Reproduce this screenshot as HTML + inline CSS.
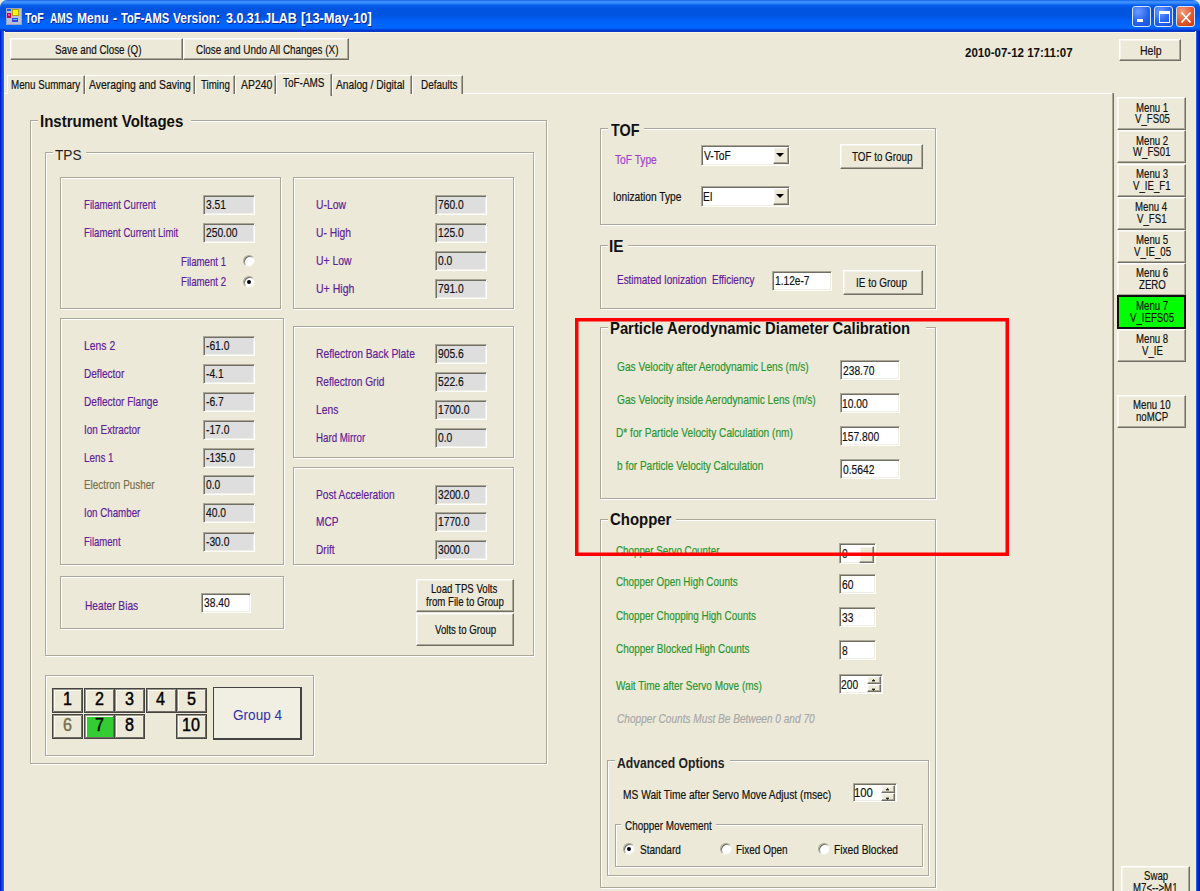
<!DOCTYPE html>
<html><head><meta charset="utf-8"><style>
*{margin:0;padding:0}
html,body{width:1200px;height:891px;overflow:hidden;background:#ECE9D8;position:relative}
body>div,body>svg{position:absolute}
div{position:absolute;box-sizing:content-box}
.t{white-space:pre;font-family:"Liberation Sans",sans-serif;transform-origin:0 0}
.gb{border:1px solid #ACA899;box-shadow:inset 1px 1px 0 #fff,1px 1px 0 #fff}
.btn{background:#ECE9D8;border:1px solid;border-color:#fff #716F64 #716F64 #fff;box-shadow:inset -1px -1px 0 #ACA899,inset 1px 1px 0 #F5F3EA}
.tb{border:1px solid;border-color:#ACA899 #fff #fff #ACA899;box-shadow:inset 1px 1px 0 #716F64,inset -1px -1px 0 #F1EFE2}
.tab{background:#ECE9D8;border:1px solid;border-bottom:none;border-color:#fff #716F64 #716F64 #fff;box-shadow:inset -1px 0 0 #ACA899}
.tab.sel{border-radius:2px 2px 0 0}
.nb{border:1px solid #45443F;box-shadow:inset 1px 1px 0 #9A978C,inset -1px -1px 0 #6E6C64,inset 2px 2px 0 #FFFDF2}
.radio{width:10px;height:10px;border-radius:50%;background:#fff;border:1px solid;border-color:#ACA899 #F1EFE2 #F1EFE2 #ACA899;box-shadow:inset 1px 1px 0 #716F64}
.radio.on::after{content:"";position:absolute;left:3px;top:3px;width:4px;height:4px;border-radius:50%;background:#000}
.title{left:0;top:0;width:1200px;height:31px;border-radius:7px 7px 0 0;background:linear-gradient(#0550E0 0px,#3A8EFF 1px,#3A8EFF 3px,#0A60F0 5px,#0054E0 8px,#0054E0 16px,#0060F4 20px,#0066FF 25px,#0066FF 28px,#0040D8 30px,#0030C0 31px)}
.lb{left:0;top:31px;width:4px;height:860px;background:linear-gradient(90deg,#0010C8,#0840E0 40%,#2A70F4)}
.rb{left:1196px;top:31px;width:4px;height:860px;background:linear-gradient(90deg,#3070F0,#0030E0 35%,#001090)}
.cb{top:6px;width:19px;height:21px;border:1px solid #D8E4FF;border-radius:3px;box-sizing:border-box;background:radial-gradient(circle at 30% 25%,#6A9CFF,#2663F0 55%,#1A50D8)}
.cb div{position:absolute}
.cb.close{background:radial-gradient(circle at 30% 25%,#F4A080,#E05A30 55%,#C83810)}
</style></head><body>
<div class="title"></div>
<div class="lb"></div><div class="rb"></div>
<div style="left:4px;top:31px;width:1192px;height:860px;background:#ECE9D8"></div>
<div style="left:4px;top:31px;width:1192px;height:1px;background:#0A3AC8"></div>
<div style="left:4px;top:32px;width:1192px;height:1px;background:#FBF6E4"></div>
<div style="left:4px;top:31px;width:1px;height:860px;background:#F8F0D8"></div>
<div style="left:1195px;top:31px;width:1px;height:860px;background:#F8F0D8"></div>
<div style="left:6px;top:8px;width:14px;height:15px;background:#B8C0D8;border:1px solid #9AA4C0"></div>
<div style="left:7px;top:9px;width:4px;height:2px;background:#1060F0"></div>
<div style="left:7px;top:13px;width:4px;height:5px;background:#D00040"></div>
<div style="left:8px;top:14px;width:2px;height:2px;background:#FF40C0"></div>
<div style="left:12px;top:9px;width:7px;height:7px;background:#FFFF00;border:1px solid #B0A000;box-sizing:border-box"></div>
<div style="left:12px;top:18px;width:6px;height:4px;background:#4040F0"></div>
<div style="left:13px;top:19px;width:4px;height:1px;background:#20E0E0"></div>
<div class="cb" style="left:1132px"><div style="left:4px;top:12px;width:6px;height:3px;background:#fff"></div></div>
<div class="cb" style="left:1154px"><div style="left:4px;top:4px;width:9px;height:10px;border:1px solid #fff;border-top-width:3px;box-sizing:border-box;width:11px;height:12px"></div></div>
<div class="cb close" style="left:1176px"><svg width="18" height="21" style="position:absolute;left:0;top:0"><path d="M4.5 5.5 L13.5 15.5 M13.5 5.5 L4.5 15.5" stroke="#fff" stroke-width="1.8"/></svg></div>
<div class="btn" style="left:10px;top:38px;width:171px;height:20px;"></div>
<div class="btn" style="left:183px;top:38px;width:164px;height:20px;"></div>
<div class="btn" style="left:1119px;top:39px;width:60px;height:20px;"></div>
<div style="left:4px;top:93px;width:1109px;height:1px;background:#fff"></div>
<div class="tab" style="left:7px;top:75px;width:76px;height:18px"></div>
<div class="tab" style="left:85px;top:75px;width:108px;height:18px"></div>
<div class="tab" style="left:195px;top:75px;width:38px;height:18px"></div>
<div class="tab" style="left:235px;top:75px;width:39px;height:18px"></div>
<div class="tab" style="left:332px;top:75px;width:78px;height:18px"></div>
<div class="tab" style="left:412px;top:75px;width:49px;height:18px"></div>
<div class="tab sel" style="left:276px;top:73px;width:54px;height:22px"></div>
<div style="left:1112px;top:93px;width:1px;height:798px;background:#ACA899"></div>
<div style="left:1113px;top:93px;width:1px;height:798px;background:#716F64"></div>
<div class="btn" style="left:1117px;top:97px;width:67px;height:31px;"></div>
<div class="btn" style="left:1117px;top:130px;width:67px;height:31px;"></div>
<div class="btn" style="left:1117px;top:164px;width:67px;height:31px;"></div>
<div class="btn" style="left:1117px;top:197px;width:67px;height:31px;"></div>
<div class="btn" style="left:1117px;top:230px;width:67px;height:31px;"></div>
<div class="btn" style="left:1117px;top:263px;width:67px;height:31px;"></div>
<div style="left:1117px;top:295px;width:65px;height:30px;background:#00FF00;border:2px solid #111"></div>
<div class="btn" style="left:1117px;top:329px;width:67px;height:31px;"></div>
<div class="btn" style="left:1117px;top:395px;width:67px;height:31px;"></div>
<div class="btn" style="left:1121px;top:866px;width:67px;height:31px;"></div>
<div class="gb" style="left:30px;top:120px;width:515px;height:642px"></div>
<div style="left:38px;top:119px;width:153px;height:4px;background:#ECE9D8"></div>
<div class="gb" style="left:45px;top:152px;width:487px;height:502px"></div>
<div style="left:53px;top:151px;width:33px;height:4px;background:#ECE9D8"></div>
<div class="gb" style="left:60px;top:177px;width:219px;height:130px"></div>
<div class="tb" style="left:203px;top:195px;width:50px;height:18px;background:#DEDEDE"></div>
<div class="tb" style="left:203px;top:223px;width:50px;height:18px;background:#DEDEDE"></div>
<div class="radio" style="left:243px;top:255px"></div>
<div class="radio on" style="left:243px;top:276px"></div>
<div class="gb" style="left:293px;top:177px;width:219px;height:130px"></div>
<div class="tb" style="left:435px;top:195px;width:50px;height:18px;background:#DEDEDE"></div>
<div class="tb" style="left:435px;top:223px;width:50px;height:18px;background:#DEDEDE"></div>
<div class="tb" style="left:435px;top:251px;width:50px;height:18px;background:#DEDEDE"></div>
<div class="tb" style="left:435px;top:279px;width:50px;height:18px;background:#DEDEDE"></div>
<div class="gb" style="left:60px;top:318px;width:222px;height:245px"></div>
<div class="tb" style="left:203px;top:336px;width:50px;height:18px;background:#DEDEDE"></div>
<div class="tb" style="left:203px;top:364px;width:50px;height:18px;background:#DEDEDE"></div>
<div class="tb" style="left:203px;top:392px;width:50px;height:18px;background:#DEDEDE"></div>
<div class="tb" style="left:203px;top:420px;width:50px;height:18px;background:#DEDEDE"></div>
<div class="tb" style="left:203px;top:448px;width:50px;height:18px;background:#DEDEDE"></div>
<div class="tb" style="left:203px;top:475px;width:50px;height:18px;background:#DEDEDE"></div>
<div class="tb" style="left:203px;top:503px;width:50px;height:18px;background:#DEDEDE"></div>
<div class="tb" style="left:203px;top:532px;width:50px;height:18px;background:#DEDEDE"></div>
<div class="gb" style="left:293px;top:326px;width:219px;height:130px"></div>
<div class="tb" style="left:435px;top:344px;width:50px;height:18px;background:#DEDEDE"></div>
<div class="tb" style="left:435px;top:372px;width:50px;height:18px;background:#DEDEDE"></div>
<div class="tb" style="left:435px;top:400px;width:50px;height:18px;background:#DEDEDE"></div>
<div class="tb" style="left:435px;top:428px;width:50px;height:18px;background:#DEDEDE"></div>
<div class="gb" style="left:293px;top:467px;width:219px;height:96px"></div>
<div class="tb" style="left:435px;top:485px;width:50px;height:18px;background:#DEDEDE"></div>
<div class="tb" style="left:435px;top:512px;width:50px;height:18px;background:#DEDEDE"></div>
<div class="tb" style="left:435px;top:540px;width:50px;height:18px;background:#DEDEDE"></div>
<div class="gb" style="left:60px;top:576px;width:222px;height:51px"></div>
<div class="tb" style="left:201px;top:593px;width:48px;height:18px;background:#fff"></div>
<div class="btn" style="left:416px;top:579px;width:96px;height:31px;"></div>
<div class="btn" style="left:416px;top:613px;width:96px;height:31px;"></div>
<div class="gb" style="left:45px;top:675px;width:267px;height:79px"></div>
<div class="nb" style="left:52px;top:688px;width:29px;height:23px;background:#ECE9D8"></div>
<div class="nb" style="left:84px;top:688px;width:29px;height:23px;background:#ECE9D8"></div>
<div class="nb" style="left:114px;top:688px;width:29px;height:23px;background:#ECE9D8"></div>
<div class="nb" style="left:146px;top:688px;width:29px;height:23px;background:#ECE9D8"></div>
<div class="nb" style="left:176px;top:688px;width:29px;height:23px;background:#ECE9D8"></div>
<div class="nb" style="left:52px;top:714px;width:29px;height:23px;background:#ECE9D8"></div>
<div class="nb" style="left:84px;top:714px;width:29px;height:23px;background:#33CC33"></div>
<div class="nb" style="left:114px;top:714px;width:29px;height:23px;background:#ECE9D8"></div>
<div class="nb" style="left:176px;top:714px;width:29px;height:23px;background:#ECE9D8"></div>
<div style="left:213px;top:687px;width:86px;height:50px;background:#F1EFE3;border:2px solid #444;border-width:1.5px 2px 2px 1.5px"></div>
<div class="gb" style="left:600px;top:128px;width:334px;height:95px"></div>
<div style="left:608px;top:127px;width:36px;height:4px;background:#ECE9D8"></div>
<div class="tb" style="left:701px;top:145px;width:87px;height:19px;background:#fff"></div>
<div class="btn" style="left:773px;top:147px;width:14px;height:15px"></div>
<svg style="position:absolute;left:776px;top:153px" width="9" height="5"><path d="M0 0H8L4 4Z" fill="#000"/></svg>
<div class="tb" style="left:701px;top:186px;width:87px;height:19px;background:#fff"></div>
<div class="btn" style="left:773px;top:188px;width:14px;height:15px"></div>
<svg style="position:absolute;left:776px;top:194px" width="9" height="5"><path d="M0 0H8L4 4Z" fill="#000"/></svg>
<div class="btn" style="left:840px;top:144px;width:81px;height:23px;"></div>
<div class="gb" style="left:600px;top:245px;width:334px;height:62px"></div>
<div style="left:608px;top:244px;width:19.600000000000023px;height:4px;background:#ECE9D8"></div>
<div class="tb" style="left:772px;top:271px;width:58px;height:18px;background:#fff"></div>
<div class="btn" style="left:843px;top:270px;width:78px;height:23px;"></div>
<div class="gb" style="left:600px;top:327px;width:334px;height:170px"></div>
<div style="left:608px;top:326px;width:318px;height:4px;background:#ECE9D8"></div>
<div class="tb" style="left:840px;top:360px;width:58px;height:18px;background:#fff"></div>
<div class="tb" style="left:840px;top:393px;width:58px;height:18px;background:#fff"></div>
<div class="tb" style="left:840px;top:426px;width:58px;height:18px;background:#fff"></div>
<div class="tb" style="left:840px;top:459px;width:58px;height:18px;background:#fff"></div>
<div class="gb" style="left:600px;top:519px;width:334px;height:367px"></div>
<div style="left:608px;top:518px;width:68px;height:4px;background:#ECE9D8"></div>
<div class="tb" style="left:839px;top:543px;width:35px;height:19px;background:#fff"></div>
<div class="btn" style="left:859px;top:546px;width:13px;height:15px"></div><div style="left:862px;top:553px;width:7px;height:1px;background:#333"></div>
<div class="tb" style="left:839px;top:574px;width:35px;height:18px;background:#fff"></div>
<div class="tb" style="left:839px;top:607px;width:35px;height:18px;background:#fff"></div>
<div class="tb" style="left:839px;top:640px;width:35px;height:18px;background:#fff"></div>
<div class="tb" style="left:839px;top:674px;width:42px;height:18px;background:#fff"></div>
<div class="btn" style="left:867px;top:676px;width:12px;height:6px"></div><div class="btn" style="left:867px;top:684px;width:12px;height:6px"></div>
<svg style="position:absolute;left:871px;top:678px" width="6" height="14"><path d="M1 3H4L2.5 1.5Z M1 11H4L2.5 12.5Z" fill="#222" stroke="#222" stroke-width="0.8"/></svg>
<div class="gb" style="left:607px;top:760px;width:320px;height:114px"></div>
<div style="left:615px;top:759px;width:115px;height:4px;background:#ECE9D8"></div>
<div class="tb" style="left:853px;top:783px;width:42px;height:17px;background:#fff"></div>
<div class="btn" style="left:881px;top:785px;width:12px;height:6px"></div><div class="btn" style="left:881px;top:793px;width:12px;height:6px"></div>
<svg style="position:absolute;left:885px;top:787px" width="6" height="14"><path d="M1 3H4L2.5 1.5Z M1 11H4L2.5 12.5Z" fill="#222" stroke="#222" stroke-width="0.8"/></svg>
<div class="gb" style="left:615px;top:824px;width:306px;height:41px"></div>
<div style="left:621px;top:823px;width:95px;height:4px;background:#ECE9D8"></div>
<div class="radio on" style="left:623px;top:843px"></div>
<div class="radio" style="left:720px;top:843px"></div>
<div class="radio" style="left:818px;top:843px"></div>
<div class="t" style="left:25.30px;top:10.68px;font-size:14.5px;line-height:14.5px;color:#fff;transform:scaleX(0.7372);font-weight:bold;text-shadow:1px 1px 0 #0A1E8C;">ToF</div>
<div class="t" style="left:49.70px;top:10.68px;font-size:14.5px;line-height:14.5px;color:#fff;transform:scaleX(0.7005);font-weight:bold;text-shadow:1px 1px 0 #0A1E8C;">AMS</div>
<div class="t" style="left:76.70px;top:10.68px;font-size:14.5px;line-height:14.5px;color:#fff;transform:scaleX(0.8324);font-weight:bold;text-shadow:1px 1px 0 #0A1E8C;">Menu</div>
<div class="t" style="left:112.50px;top:10.68px;font-size:14.5px;line-height:14.5px;color:#fff;transform:scaleX(0.8400);font-weight:bold;text-shadow:1px 1px 0 #0A1E8C;">-</div>
<div class="t" style="left:120.80px;top:10.68px;font-size:14.5px;line-height:14.5px;color:#fff;transform:scaleX(0.7698);font-weight:bold;text-shadow:1px 1px 0 #0A1E8C;">ToF-AMS</div>
<div class="t" style="left:173.30px;top:10.68px;font-size:14.5px;line-height:14.5px;color:#fff;transform:scaleX(0.8229);font-weight:bold;text-shadow:1px 1px 0 #0A1E8C;">Version:</div>
<div class="t" style="left:225.80px;top:10.68px;font-size:14.5px;line-height:14.5px;color:#fff;transform:scaleX(0.8625);font-weight:bold;text-shadow:1px 1px 0 #0A1E8C;">3.0.31.JLAB</div>
<div class="t" style="left:300.80px;top:10.68px;font-size:14.5px;line-height:14.5px;color:#fff;transform:scaleX(0.8868);font-weight:bold;text-shadow:1px 1px 0 #0A1E8C;">[13-May-10]</div>
<div class="t" style="left:54.60px;top:42.52px;font-size:13.5px;line-height:13.5px;color:#111;transform:scaleX(0.7302);-webkit-text-stroke:0.2px #111;">Save and Close (Q)</div>
<div class="t" style="left:195.50px;top:42.52px;font-size:13.5px;line-height:13.5px;color:#111;transform:scaleX(0.7328);-webkit-text-stroke:0.2px #111;">Close and Undo All Changes (X)</div>
<div class="t" style="left:965.40px;top:45.94px;font-size:13.6px;line-height:13.6px;color:#111;transform:scaleX(0.8480);font-weight:bold;">2010-07-12 17:11:07</div>
<div class="t" style="left:1139.82px;top:44.02px;font-size:13.5px;line-height:13.5px;color:#111;transform:scaleX(0.7769);-webkit-text-stroke:0.2px #111;">Help</div>
<div class="t" style="left:10.78px;top:78.03px;font-size:13.5px;line-height:13.5px;color:#111;transform:scaleX(0.7247);-webkit-text-stroke:0.2px #111;">Menu Summary</div>
<div class="t" style="left:89.00px;top:78.03px;font-size:13.5px;line-height:13.5px;color:#111;transform:scaleX(0.7728);-webkit-text-stroke:0.2px #111;">Averaging and Saving</div>
<div class="t" style="left:201.00px;top:78.03px;font-size:13.5px;line-height:13.5px;color:#111;transform:scaleX(0.7216);-webkit-text-stroke:0.2px #111;">Timing</div>
<div class="t" style="left:240.50px;top:78.03px;font-size:13.5px;line-height:13.5px;color:#111;transform:scaleX(0.7745);-webkit-text-stroke:0.2px #111;">AP240</div>
<div class="t" style="left:335.70px;top:78.03px;font-size:13.5px;line-height:13.5px;color:#111;transform:scaleX(0.7555);-webkit-text-stroke:0.2px #111;">Analog / Digital</div>
<div class="t" style="left:420.86px;top:78.03px;font-size:13.5px;line-height:13.5px;color:#111;transform:scaleX(0.7381);-webkit-text-stroke:0.2px #111;">Defaults</div>
<div class="t" style="left:283.00px;top:76.03px;font-size:13.5px;line-height:13.5px;color:#111;transform:scaleX(0.7378);-webkit-text-stroke:0.2px #111;">ToF-AMS</div>
<div class="t" style="left:1135.73px;top:100.62px;font-size:13.5px;line-height:13.5px;color:#111;transform:scaleX(0.7150);-webkit-text-stroke:0.2px #111;">Menu 1</div>
<div class="t" style="left:1134.74px;top:112.33px;font-size:13.5px;line-height:13.5px;color:#111;transform:scaleX(0.7150);-webkit-text-stroke:0.2px #111;">V_FS05</div>
<div class="t" style="left:1135.73px;top:133.73px;font-size:13.5px;line-height:13.5px;color:#111;transform:scaleX(0.7150);-webkit-text-stroke:0.2px #111;">Menu 2</div>
<div class="t" style="left:1133.41px;top:145.43px;font-size:13.5px;line-height:13.5px;color:#111;transform:scaleX(0.7150);-webkit-text-stroke:0.2px #111;">W_FS01</div>
<div class="t" style="left:1135.73px;top:166.83px;font-size:13.5px;line-height:13.5px;color:#111;transform:scaleX(0.7150);-webkit-text-stroke:0.2px #111;">Menu 3</div>
<div class="t" style="left:1133.40px;top:178.53px;font-size:13.5px;line-height:13.5px;color:#111;transform:scaleX(0.7150);-webkit-text-stroke:0.2px #111;">V_IE_F1</div>
<div class="t" style="left:1135.37px;top:199.93px;font-size:13.5px;line-height:13.5px;color:#111;transform:scaleX(0.7150);-webkit-text-stroke:0.2px #111;">Menu 4</div>
<div class="t" style="left:1137.43px;top:211.63px;font-size:13.5px;line-height:13.5px;color:#111;transform:scaleX(0.7150);-webkit-text-stroke:0.2px #111;">V_FS1</div>
<div class="t" style="left:1135.73px;top:233.03px;font-size:13.5px;line-height:13.5px;color:#111;transform:scaleX(0.7150);-webkit-text-stroke:0.2px #111;">Menu 5</div>
<div class="t" style="left:1133.67px;top:244.72px;font-size:13.5px;line-height:13.5px;color:#111;transform:scaleX(0.7150);-webkit-text-stroke:0.2px #111;">V_IE_05</div>
<div class="t" style="left:1135.73px;top:266.12px;font-size:13.5px;line-height:13.5px;color:#111;transform:scaleX(0.7150);-webkit-text-stroke:0.2px #111;">Menu 6</div>
<div class="t" style="left:1138.77px;top:277.82px;font-size:13.5px;line-height:13.5px;color:#111;transform:scaleX(0.7150);-webkit-text-stroke:0.2px #111;">ZERO</div>
<div class="t" style="left:1135.73px;top:299.23px;font-size:13.5px;line-height:13.5px;color:#111;transform:scaleX(0.7150);-webkit-text-stroke:0.2px #111;">Menu 7</div>
<div class="t" style="left:1130.18px;top:310.93px;font-size:13.5px;line-height:13.5px;color:#111;transform:scaleX(0.7150);-webkit-text-stroke:0.2px #111;">V_IEFS05</div>
<div class="t" style="left:1135.73px;top:332.32px;font-size:13.5px;line-height:13.5px;color:#111;transform:scaleX(0.7150);-webkit-text-stroke:0.2px #111;">Menu 8</div>
<div class="t" style="left:1141.54px;top:344.02px;font-size:13.5px;line-height:13.5px;color:#111;transform:scaleX(0.7150);-webkit-text-stroke:0.2px #111;">V_IE</div>
<div class="t" style="left:1133.04px;top:398.02px;font-size:13.5px;line-height:13.5px;color:#111;transform:scaleX(0.7150);-webkit-text-stroke:0.2px #111;">Menu 10</div>
<div class="t" style="left:1135.91px;top:409.72px;font-size:13.5px;line-height:13.5px;color:#111;transform:scaleX(0.7150);-webkit-text-stroke:0.2px #111;">noMCP</div>
<div class="t" style="left:1143.61px;top:868.82px;font-size:13.5px;line-height:13.5px;color:#111;transform:scaleX(0.7150);-webkit-text-stroke:0.2px #111;">Swap</div>
<div class="t" style="left:1133.06px;top:880.52px;font-size:13.5px;line-height:13.5px;color:#111;transform:scaleX(0.7150);-webkit-text-stroke:0.2px #111;">M7&lt;--&gt;M1</div>
<div class="t" style="left:39.89px;top:113.22px;font-size:16.5px;line-height:16.5px;color:#111;transform:scaleX(0.9103);font-weight:bold;">Instrument Voltages</div>
<div class="t" style="left:54.75px;top:147.07px;font-size:15.5px;line-height:15.5px;color:#222;transform:scaleX(0.8807);">TPS</div>
<div class="t" style="left:84.09px;top:197.83px;font-size:13.5px;line-height:13.5px;color:#5E2098;transform:scaleX(0.7136);-webkit-text-stroke:0.2px #5E2098;">Filament Current</div>
<div class="t" style="left:84.09px;top:225.53px;font-size:13.5px;line-height:13.5px;color:#5E2098;transform:scaleX(0.7097);-webkit-text-stroke:0.2px #5E2098;">Filament Current Limit</div>
<div class="t" style="left:205.80px;top:197.72px;font-size:13.5px;line-height:13.5px;color:#111;transform:scaleX(0.7600);-webkit-text-stroke:0.2px #111;">3.51</div>
<div class="t" style="left:205.80px;top:225.72px;font-size:13.5px;line-height:13.5px;color:#111;transform:scaleX(0.7600);-webkit-text-stroke:0.2px #111;">250.00</div>
<div class="t" style="left:181.28px;top:254.72px;font-size:13.5px;line-height:13.5px;color:#5E2098;transform:scaleX(0.7150);-webkit-text-stroke:0.2px #5E2098;">Filament 1</div>
<div class="t" style="left:181.28px;top:275.12px;font-size:13.5px;line-height:13.5px;color:#5E2098;transform:scaleX(0.7150);-webkit-text-stroke:0.2px #5E2098;">Filament 2</div>
<div class="t" style="left:316.23px;top:198.03px;font-size:13.5px;line-height:13.5px;color:#5E2098;transform:scaleX(0.7658);-webkit-text-stroke:0.2px #5E2098;">U-Low</div>
<div class="t" style="left:438.30px;top:198.03px;font-size:13.5px;line-height:13.5px;color:#111;transform:scaleX(0.7600);-webkit-text-stroke:0.2px #111;">760.0</div>
<div class="t" style="left:316.24px;top:226.03px;font-size:13.5px;line-height:13.5px;color:#5E2098;transform:scaleX(0.7638);-webkit-text-stroke:0.2px #5E2098;">U- High</div>
<div class="t" style="left:437.54px;top:226.03px;font-size:13.5px;line-height:13.5px;color:#111;transform:scaleX(0.7600);-webkit-text-stroke:0.2px #111;">125.0</div>
<div class="t" style="left:316.23px;top:254.03px;font-size:13.5px;line-height:13.5px;color:#5E2098;transform:scaleX(0.7709);-webkit-text-stroke:0.2px #5E2098;">U+ Low</div>
<div class="t" style="left:438.30px;top:254.03px;font-size:13.5px;line-height:13.5px;color:#111;transform:scaleX(0.7600);-webkit-text-stroke:0.2px #111;">0.0</div>
<div class="t" style="left:316.22px;top:282.02px;font-size:13.5px;line-height:13.5px;color:#5E2098;transform:scaleX(0.7809);-webkit-text-stroke:0.2px #5E2098;">U+ High</div>
<div class="t" style="left:438.30px;top:282.02px;font-size:13.5px;line-height:13.5px;color:#111;transform:scaleX(0.7600);-webkit-text-stroke:0.2px #111;">791.0</div>
<div class="t" style="left:84.03px;top:338.72px;font-size:13.5px;line-height:13.5px;color:#5E2098;transform:scaleX(0.7687);-webkit-text-stroke:0.2px #5E2098;">Lens 2</div>
<div class="t" style="left:205.50px;top:338.72px;font-size:13.5px;line-height:13.5px;color:#111;transform:scaleX(0.7600);-webkit-text-stroke:0.2px #111;">-61.0</div>
<div class="t" style="left:84.05px;top:366.77px;font-size:13.5px;line-height:13.5px;color:#5E2098;transform:scaleX(0.7455);-webkit-text-stroke:0.2px #5E2098;">Deflector</div>
<div class="t" style="left:205.50px;top:366.77px;font-size:13.5px;line-height:13.5px;color:#111;transform:scaleX(0.7600);-webkit-text-stroke:0.2px #111;">-4.1</div>
<div class="t" style="left:84.05px;top:394.52px;font-size:13.5px;line-height:13.5px;color:#5E2098;transform:scaleX(0.7474);-webkit-text-stroke:0.2px #5E2098;">Deflector Flange</div>
<div class="t" style="left:205.50px;top:394.52px;font-size:13.5px;line-height:13.5px;color:#111;transform:scaleX(0.7600);-webkit-text-stroke:0.2px #111;">-6.7</div>
<div class="t" style="left:84.06px;top:422.52px;font-size:13.5px;line-height:13.5px;color:#5E2098;transform:scaleX(0.7358);-webkit-text-stroke:0.2px #5E2098;">Ion Extractor</div>
<div class="t" style="left:205.50px;top:422.52px;font-size:13.5px;line-height:13.5px;color:#111;transform:scaleX(0.7600);-webkit-text-stroke:0.2px #111;">-17.0</div>
<div class="t" style="left:84.07px;top:450.52px;font-size:13.5px;line-height:13.5px;color:#5E2098;transform:scaleX(0.7303);-webkit-text-stroke:0.2px #5E2098;">Lens 1</div>
<div class="t" style="left:205.50px;top:450.52px;font-size:13.5px;line-height:13.5px;color:#111;transform:scaleX(0.7600);-webkit-text-stroke:0.2px #111;">-135.0</div>
<div class="t" style="left:84.07px;top:478.27px;font-size:13.5px;line-height:13.5px;color:#77704F;transform:scaleX(0.7347);-webkit-text-stroke:0.2px #77704F;">Electron Pusher</div>
<div class="t" style="left:205.50px;top:478.27px;font-size:13.5px;line-height:13.5px;color:#111;transform:scaleX(0.7600);-webkit-text-stroke:0.2px #111;">0.0</div>
<div class="t" style="left:84.08px;top:506.02px;font-size:13.5px;line-height:13.5px;color:#5E2098;transform:scaleX(0.7215);-webkit-text-stroke:0.2px #5E2098;">Ion Chamber</div>
<div class="t" style="left:205.50px;top:506.02px;font-size:13.5px;line-height:13.5px;color:#111;transform:scaleX(0.7600);-webkit-text-stroke:0.2px #111;">40.0</div>
<div class="t" style="left:84.09px;top:535.02px;font-size:13.5px;line-height:13.5px;color:#5E2098;transform:scaleX(0.7057);-webkit-text-stroke:0.2px #5E2098;">Filament</div>
<div class="t" style="left:205.50px;top:535.02px;font-size:13.5px;line-height:13.5px;color:#111;transform:scaleX(0.7600);-webkit-text-stroke:0.2px #111;">-30.0</div>
<div class="t" style="left:316.24px;top:347.02px;font-size:13.5px;line-height:13.5px;color:#5E2098;transform:scaleX(0.7615);-webkit-text-stroke:0.2px #5E2098;">Reflectron Back Plate</div>
<div class="t" style="left:438.30px;top:347.02px;font-size:13.5px;line-height:13.5px;color:#111;transform:scaleX(0.7600);-webkit-text-stroke:0.2px #111;">905.6</div>
<div class="t" style="left:316.25px;top:375.02px;font-size:13.5px;line-height:13.5px;color:#5E2098;transform:scaleX(0.7527);-webkit-text-stroke:0.2px #5E2098;">Reflectron Grid</div>
<div class="t" style="left:438.30px;top:375.02px;font-size:13.5px;line-height:13.5px;color:#111;transform:scaleX(0.7600);-webkit-text-stroke:0.2px #111;">522.6</div>
<div class="t" style="left:316.24px;top:403.02px;font-size:13.5px;line-height:13.5px;color:#5E2098;transform:scaleX(0.7608);-webkit-text-stroke:0.2px #5E2098;">Lens</div>
<div class="t" style="left:437.54px;top:403.02px;font-size:13.5px;line-height:13.5px;color:#111;transform:scaleX(0.7600);-webkit-text-stroke:0.2px #111;">1700.0</div>
<div class="t" style="left:316.28px;top:431.02px;font-size:13.5px;line-height:13.5px;color:#5E2098;transform:scaleX(0.7202);-webkit-text-stroke:0.2px #5E2098;">Hard Mirror</div>
<div class="t" style="left:438.30px;top:431.02px;font-size:13.5px;line-height:13.5px;color:#111;transform:scaleX(0.7600);-webkit-text-stroke:0.2px #111;">0.0</div>
<div class="t" style="left:316.25px;top:487.72px;font-size:13.5px;line-height:13.5px;color:#5E2098;transform:scaleX(0.7533);-webkit-text-stroke:0.2px #5E2098;">Post Acceleration</div>
<div class="t" style="left:438.30px;top:487.72px;font-size:13.5px;line-height:13.5px;color:#111;transform:scaleX(0.7600);-webkit-text-stroke:0.2px #111;">3200.0</div>
<div class="t" style="left:316.25px;top:515.23px;font-size:13.5px;line-height:13.5px;color:#5E2098;transform:scaleX(0.7484);-webkit-text-stroke:0.2px #5E2098;">MCP</div>
<div class="t" style="left:437.54px;top:515.23px;font-size:13.5px;line-height:13.5px;color:#111;transform:scaleX(0.7600);-webkit-text-stroke:0.2px #111;">1770.0</div>
<div class="t" style="left:316.25px;top:542.73px;font-size:13.5px;line-height:13.5px;color:#5E2098;transform:scaleX(0.7502);-webkit-text-stroke:0.2px #5E2098;">Drift</div>
<div class="t" style="left:438.30px;top:542.73px;font-size:13.5px;line-height:13.5px;color:#111;transform:scaleX(0.7600);-webkit-text-stroke:0.2px #111;">3000.0</div>
<div class="t" style="left:84.55px;top:599.12px;font-size:13.5px;line-height:13.5px;color:#5E2098;transform:scaleX(0.7538);-webkit-text-stroke:0.2px #5E2098;">Heater Bias</div>
<div class="t" style="left:203.50px;top:596.02px;font-size:13.5px;line-height:13.5px;color:#111;transform:scaleX(0.7600);-webkit-text-stroke:0.2px #111;">38.40</div>
<div class="t" style="left:431.29px;top:582.12px;font-size:13.5px;line-height:13.5px;color:#111;transform:scaleX(0.7150);-webkit-text-stroke:0.2px #111;">Load TPS Volts</div>
<div class="t" style="left:426.29px;top:594.62px;font-size:13.5px;line-height:13.5px;color:#111;transform:scaleX(0.7150);-webkit-text-stroke:0.2px #111;">from File to Group</div>
<div class="t" style="left:434.60px;top:623.02px;font-size:13.5px;line-height:13.5px;color:#111;transform:scaleX(0.7150);-webkit-text-stroke:0.2px #111;">Volts to Group</div>
<div class="t" style="left:62.90px;top:691.33px;font-size:17.5px;line-height:17.5px;color:#000;transform:scaleX(0.9200);-webkit-text-stroke:0.45px #000;">1</div>
<div class="t" style="left:94.56px;top:691.33px;font-size:17.5px;line-height:17.5px;color:#000;transform:scaleX(0.9200);-webkit-text-stroke:0.45px #000;">2</div>
<div class="t" style="left:125.36px;top:691.33px;font-size:17.5px;line-height:17.5px;color:#000;transform:scaleX(0.9200);-webkit-text-stroke:0.45px #000;">3</div>
<div class="t" style="left:155.90px;top:691.33px;font-size:17.5px;line-height:17.5px;color:#000;transform:scaleX(0.9200);-webkit-text-stroke:0.45px #000;">4</div>
<div class="t" style="left:187.36px;top:691.33px;font-size:17.5px;line-height:17.5px;color:#000;transform:scaleX(0.9200);-webkit-text-stroke:0.45px #000;">5</div>
<div class="t" style="left:63.36px;top:717.33px;font-size:17.5px;line-height:17.5px;color:#76704E;transform:scaleX(0.9200);-webkit-text-stroke:0.45px #76704E;">6</div>
<div class="t" style="left:94.56px;top:717.33px;font-size:17.5px;line-height:17.5px;color:#000;transform:scaleX(0.9200);-webkit-text-stroke:0.45px #000;">7</div>
<div class="t" style="left:125.36px;top:717.33px;font-size:17.5px;line-height:17.5px;color:#000;transform:scaleX(0.9200);-webkit-text-stroke:0.45px #000;">8</div>
<div class="t" style="left:181.96px;top:717.33px;font-size:17.5px;line-height:17.5px;color:#000;transform:scaleX(0.9200);-webkit-text-stroke:0.45px #000;">10</div>
<div class="t" style="left:233.00px;top:706.83px;font-size:15.5px;line-height:15.5px;color:#3030A8;transform:scaleX(0.8761);">Group 4</div>
<div class="t" style="left:611.30px;top:121.78px;font-size:16.5px;line-height:16.5px;color:#111;transform:scaleX(0.8708);font-weight:bold;">TOF</div>
<div class="t" style="left:614.70px;top:153.22px;font-size:13.5px;line-height:13.5px;color:#A040D0;transform:scaleX(0.7562);-webkit-text-stroke:0.2px #A040D0;">ToF Type</div>
<div class="t" style="left:612.54px;top:189.83px;font-size:13.5px;line-height:13.5px;color:#111;transform:scaleX(0.7559);-webkit-text-stroke:0.2px #111;">Ionization Type</div>
<div class="t" style="left:703.70px;top:148.72px;font-size:13.5px;line-height:13.5px;color:#111;transform:scaleX(0.7600);-webkit-text-stroke:0.2px #111;">V-ToF</div>
<div class="t" style="left:702.94px;top:189.72px;font-size:13.5px;line-height:13.5px;color:#111;transform:scaleX(0.7600);-webkit-text-stroke:0.2px #111;">EI</div>
<div class="t" style="left:851.50px;top:149.72px;font-size:13.5px;line-height:13.5px;color:#111;transform:scaleX(0.7271);-webkit-text-stroke:0.2px #111;">TOF to Group</div>
<div class="t" style="left:609.47px;top:238.07px;font-size:16.5px;line-height:16.5px;color:#111;transform:scaleX(0.9325);font-weight:bold;">IE</div>
<div class="t" style="left:616.86px;top:273.42px;font-size:13.5px;line-height:13.5px;color:#5E2098;transform:scaleX(0.7361);-webkit-text-stroke:0.2px #5E2098;">Estimated Ionization  Efficiency</div>
<div class="t" style="left:774.85px;top:274.02px;font-size:13.5px;line-height:13.5px;color:#111;transform:scaleX(0.7543);-webkit-text-stroke:0.2px #111;">1.12e-7</div>
<div class="t" style="left:856.46px;top:275.62px;font-size:13.5px;line-height:13.5px;color:#111;transform:scaleX(0.7375);-webkit-text-stroke:0.2px #111;">IE to Group</div>
<div class="t" style="left:610.10px;top:319.78px;font-size:16.5px;line-height:16.5px;color:#111;transform:scaleX(0.8980);font-weight:bold;">Particle Aerodynamic Diameter Calibration</div>
<div class="t" style="left:616.80px;top:359.52px;font-size:13.5px;line-height:13.5px;color:#2A962F;transform:scaleX(0.7515);-webkit-text-stroke:0.2px #2A962F;">Gas Velocity after Aerodynamic Lens (m/s)</div>
<div class="t" style="left:842.80px;top:363.52px;font-size:13.5px;line-height:13.5px;color:#111;transform:scaleX(0.7600);-webkit-text-stroke:0.2px #111;">238.70</div>
<div class="t" style="left:616.80px;top:392.52px;font-size:13.5px;line-height:13.5px;color:#2A962F;transform:scaleX(0.7545);-webkit-text-stroke:0.2px #2A962F;">Gas Velocity inside Aerodynamic Lens (m/s)</div>
<div class="t" style="left:842.04px;top:396.52px;font-size:13.5px;line-height:13.5px;color:#111;transform:scaleX(0.7600);-webkit-text-stroke:0.2px #111;">10.00</div>
<div class="t" style="left:616.05px;top:425.52px;font-size:13.5px;line-height:13.5px;color:#2A962F;transform:scaleX(0.7506);-webkit-text-stroke:0.2px #2A962F;">D* for Particle Velocity Calculation (nm)</div>
<div class="t" style="left:842.04px;top:429.52px;font-size:13.5px;line-height:13.5px;color:#111;transform:scaleX(0.7600);-webkit-text-stroke:0.2px #111;">157.800</div>
<div class="t" style="left:616.80px;top:458.52px;font-size:13.5px;line-height:13.5px;color:#2A962F;transform:scaleX(0.7441);-webkit-text-stroke:0.2px #2A962F;">b for Particle Velocity Calculation</div>
<div class="t" style="left:842.80px;top:462.52px;font-size:13.5px;line-height:13.5px;color:#111;transform:scaleX(0.7600);-webkit-text-stroke:0.2px #111;">0.5642</div>
<div class="t" style="left:610.00px;top:511.23px;font-size:16.5px;line-height:16.5px;color:#111;transform:scaleX(0.9049);font-weight:bold;">Chopper</div>
<div class="t" style="left:616.25px;top:543.52px;font-size:13.5px;line-height:13.5px;color:#2A962F;transform:scaleX(0.7251);-webkit-text-stroke:0.2px #2A962F;">Chopper Servo Counter</div>
<div class="t" style="left:616.25px;top:575.27px;font-size:13.5px;line-height:13.5px;color:#2A962F;transform:scaleX(0.7297);-webkit-text-stroke:0.2px #2A962F;">Chopper Open High Counts</div>
<div class="t" style="left:616.25px;top:608.52px;font-size:13.5px;line-height:13.5px;color:#2A962F;transform:scaleX(0.7306);-webkit-text-stroke:0.2px #2A962F;">Chopper Chopping High Counts</div>
<div class="t" style="left:616.25px;top:641.52px;font-size:13.5px;line-height:13.5px;color:#2A962F;transform:scaleX(0.7355);-webkit-text-stroke:0.2px #2A962F;">Chopper Blocked High Counts</div>
<div class="t" style="left:616.25px;top:679.02px;font-size:13.5px;line-height:13.5px;color:#2A962F;transform:scaleX(0.7416);-webkit-text-stroke:0.2px #2A962F;">Wait Time after Servo Move (ms)</div>
<div class="t" style="left:842.00px;top:547.02px;font-size:13.5px;line-height:13.5px;color:#111;transform:scaleX(0.7600);-webkit-text-stroke:0.2px #111;">0</div>
<div class="t" style="left:842.00px;top:577.52px;font-size:13.5px;line-height:13.5px;color:#111;transform:scaleX(0.7600);-webkit-text-stroke:0.2px #111;">60</div>
<div class="t" style="left:842.00px;top:610.52px;font-size:13.5px;line-height:13.5px;color:#111;transform:scaleX(0.7600);-webkit-text-stroke:0.2px #111;">33</div>
<div class="t" style="left:842.00px;top:643.52px;font-size:13.5px;line-height:13.5px;color:#111;transform:scaleX(0.7600);-webkit-text-stroke:0.2px #111;">8</div>
<div class="t" style="left:840.50px;top:677.52px;font-size:13.5px;line-height:13.5px;color:#111;transform:scaleX(0.7600);-webkit-text-stroke:0.2px #111;">200</div>
<div class="t" style="left:617.00px;top:712.02px;font-size:13.5px;line-height:13.5px;color:#A8A8A8;transform:scaleX(0.7481);-webkit-text-stroke:0.2px #A8A8A8;font-style:italic;">Chopper Counts Must Be Between 0 and 70</div>
<div class="t" style="left:617.00px;top:756.30px;font-size:14px;line-height:14px;color:#222;transform:scaleX(0.8693);font-weight:bold;">Advanced Options</div>
<div class="t" style="left:623.24px;top:787.82px;font-size:13.5px;line-height:13.5px;color:#111;transform:scaleX(0.7555);-webkit-text-stroke:0.2px #111;">MS Wait Time after Servo Move Adjust (msec)</div>
<div class="t" style="left:854.16px;top:785.62px;font-size:13.5px;line-height:13.5px;color:#111;transform:scaleX(0.8375);-webkit-text-stroke:0.2px #111;">100</div>
<div class="t" style="left:625.00px;top:819.02px;font-size:13.5px;line-height:13.5px;color:#111;transform:scaleX(0.7323);-webkit-text-stroke:0.2px #111;">Chopper Movement</div>
<div class="t" style="left:639.70px;top:842.52px;font-size:13.5px;line-height:13.5px;color:#111;transform:scaleX(0.7461);-webkit-text-stroke:0.2px #111;">Standard</div>
<div class="t" style="left:735.86px;top:842.52px;font-size:13.5px;line-height:13.5px;color:#111;transform:scaleX(0.7381);-webkit-text-stroke:0.2px #111;">Fixed Open</div>
<div class="t" style="left:833.84px;top:842.52px;font-size:13.5px;line-height:13.5px;color:#111;transform:scaleX(0.7553);-webkit-text-stroke:0.2px #111;">Fixed Blocked</div>
<svg style="position:absolute;left:0;top:0" width="1200" height="891"><rect x="576.75" y="319.75" width="430.5" height="234.5" fill="none" stroke="#FF0000" stroke-width="3.5"/></svg>
</body></html>
